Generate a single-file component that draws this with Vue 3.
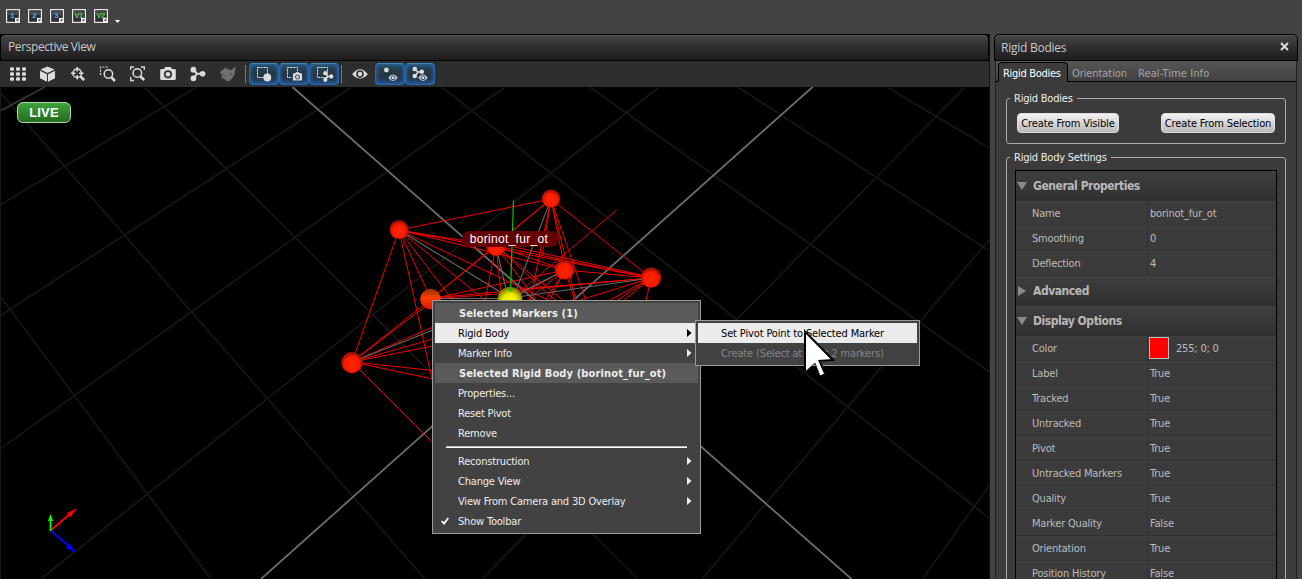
<script setup>
const layouts = [
  { label: '1', kind: 'blue', x: 4 },
  { label: '2', kind: 'blue', x: 4 },
  { label: '3', kind: 'blue', x: 4 },
  { label: 'V1', kind: 'green', x: 2.6 },
  { label: 'V2', kind: 'green', x: 2.6 },
]
const grid = [
  [0, 92.5, 425, 579], [0, 296, 211, 579], [144, 87, 638, 579], [441.7, 87, 989, 518],
  [590, 87, 989, 371.7], [738, 87, 989, 250.7], [887, 87, 989, 147.7],
  [0, 205, 197, 87], [0, 316, 352, 87], [0, 449, 505, 87], [40.7, 579, 659, 87],
  [482, 579, 965, 87], [989, 240, 702, 579], [989, 485.7, 922.7, 579],
]
const bonds = [
  [399, 230, 551, 199], [399, 230, 352, 362], [399, 230, 432, 379], [399, 230, 431, 299], [399, 230, 454, 302],
  [399, 230, 487, 302], [399, 230, 552, 302], [399, 230, 565, 270], [399, 230, 651, 278], [399, 230, 496, 246],
  [551, 199, 651, 278], [551, 199, 496, 244], [551, 199, 431, 299], [551, 199, 576, 301], [551, 199, 586, 301],
  [551, 199, 530, 301], [551, 199, 565, 270], [551, 199, 542, 256],
  [496, 246, 431, 299], [496, 246, 565, 270], [496, 246, 651, 278], [496, 243, 651, 277], [496, 246, 485, 301],
  [496, 246, 502, 301], [496, 246, 537, 301], [496, 246, 556, 301], [496, 246, 564, 301],
  [565, 270, 651, 278], [565, 270, 431, 299], [565, 270, 510, 300], [565, 270, 545, 301], [565, 270, 549, 301],
  [565, 270, 575, 301], [565, 270, 526, 301],
  [651, 278, 431, 298], [651, 278, 510, 290], [651, 278, 608, 301], [651, 278, 616, 301], [651, 278, 623, 301],
  [651, 278, 577, 301], [651, 278, 646, 301], [431, 299, 510, 293],
  [352, 362, 431, 299], [352, 362, 434, 300], [352, 362, 433, 327], [352, 362, 433, 339], [352, 362, 433, 346],
  [352, 362, 433, 370.5], [352, 362, 433, 379], [352, 362, 433, 443],
]
const pivots = [
  [399, 230, 510, 298], [551, 199, 514, 296], [496, 246, 508, 298], [565, 270, 510, 298],
  [651, 278, 510, 298], [431, 298.5, 510, 298.5], [352, 362, 433, 330],
]
const markers = [
  [399, 229.5, 9.5], [551, 198.5, 9.3], [496, 246, 10], [564.5, 269.5, 10], [651, 277.5, 10.3], [352, 362.5, 10.7],
]
const menu = [
  { head: 'Selected Markers (1)' },
  { text: 'Rigid Body', sub: true, on: true },
  { text: 'Marker Info', sub: true },
  { head: 'Selected Rigid Body (borinot_fur_ot)' },
  { text: 'Properties...' },
  { text: 'Reset Pivot' },
  { text: 'Remove' },
  { line: true },
  { text: 'Reconstruction', sub: true },
  { text: 'Change View', sub: true },
  { text: 'View From Camera and 3D Overlay', sub: true },
  { text: 'Show Toolbar', check: true },
]
const sections = [
  { title: 'General Properties', open: true, rows: [['Name', 'borinot_fur_ot'], ['Smoothing', '0'], ['Deflection', '4']] },
  { title: 'Advanced', open: false, rows: [] },
  {
    title: 'Display Options', open: true,
    rows: [['Color', '255; 0; 0', true], ['Label', 'True'], ['Tracked', 'True'], ['Untracked', 'True'], ['Pivot', 'True'],
      ['Untracked Markers', 'True'], ['Quality', 'True'], ['Marker Quality', 'False'], ['Orientation', 'True'], ['Position History', 'False']],
  },
]
</script>

<template>
  <div class="app">
    <header class="topbar">
      <svg v-for="l in layouts" :key="l.label" class="layout" width="14" height="14" viewBox="0 0 14 14">
        <rect x=".6" y=".6" width="12.8" height="12.8" fill="#303030" stroke="#e8e8e8" stroke-width="1.2" />
        <rect x="2" y="2" width="10" height="4" fill="#484848" />
        <text :x="l.x" y="9" :class="['num', l.kind]">{{ l.label }}</text>
        <path d="M9 9H14V14H9Z" fill="#eee" /><path d="M10 10.5H13L11.5 12.5Z" fill="#333" />
      </svg>
      <svg class="more" width="5" height="3" viewBox="0 0 5 3"><path d="M0 0H5L2.5 3Z" fill="#fff" /></svg>
    </header>

    <main class="body">
      <section class="view">
        <h2 class="title">Perspective View</h2>
        <nav class="tools">
          <svg width="30" height="26" viewBox="0 0 30 26" class="ic">
            <g v-for="y in [8, 13, 18]" :key="y"><rect v-for="x in [7, 13, 19]" :key="x" :x="x" :y="y - 1.7" width="4" height="3.4" rx="1.2" /></g>
          </svg>
          <svg width="30" height="26" viewBox="0 0 30 26" class="ic">
            <path d="M17.5 5.5L24.5 8.6L17.5 12L10.5 8.6ZM10 9.8L17 13.2V20.8L10 17.2ZM25 9.8L18 13.2V20.8L25 17.2Z" />
          </svg>
          <svg width="30" height="26" viewBox="0 0 30 26" class="ic">
            <g class="ln"><circle cx="17.2" cy="12.3" r="4.3" /><path d="M17.2 6V10.5M17.2 14V18.5M11 12.3H15.5M19 12.3H23.5" /><path d="M20.5 15.5L24.2 19.2" stroke-width="2.6" /></g>
          </svg>
          <svg width="30" height="26" viewBox="0 0 30 26" class="ic">
            <g class="ln"><circle cx="18.4" cy="13" r="4.2" /><path d="M21.5 16.3L25 20" stroke-width="2.6" /><path d="M10.5 14V6H19" stroke-dasharray="2 1.3" stroke-width="1.2" /></g>
          </svg>
          <svg width="30" height="26" viewBox="0 0 30 26" class="ic">
            <g class="ln"><circle cx="17.3" cy="12" r="4.3" /><path d="M20.5 15.5L24.2 19" stroke-width="2.6" /><path d="M10.7 9V6H14M21 6H24.3V9M10.7 16V19.5H14" stroke-width="1.3" /></g>
          </svg>
          <svg width="30" height="26" viewBox="0 0 30 26" class="ic">
            <path fill-rule="evenodd" d="M11.5 8H14L15.2 6H20.8L22 8H24.5Q25.8 8 25.8 9.2V17.8Q25.8 19 24.5 19H11.5Q10.2 19 10.2 17.8V9.2Q10.2 8 11.5 8ZM18 9.2A4.1 4.1 0 1 0 18 17.4A4.1 4.1 0 1 0 18 9.2Z" /><circle cx="18" cy="13.3" r="2.4" />
          </svg>
          <svg width="30" height="26" viewBox="0 0 30 26" class="ic">
            <circle cx="13.4" cy="8.7" r="2.9" /><circle cx="13.4" cy="17.3" r="2.9" /><circle cx="22.6" cy="12.8" r="2.8" /><path d="M13 8L17 12.8L13 18M16.5 12.8H22" class="ln thick" />
          </svg>
          <svg width="30" height="26" viewBox="0 0 30 26" class="ic dim">
            <path d="M10 11.5Q11 9 14 8.2L15.5 6L17.5 8.3L21.5 9L25.8 5.2L25 9.5Q25 14 22.5 17L18.5 20.5Q15 20 13.5 17L11.5 18.5L12 14Z" /><path d="M12.5 13L15 15.5M20 13.5L22 12.8" stroke="#484848" fill="none" />
          </svg>
          <i class="sep" />
          <span class="tg">
            <svg width="28" height="22" viewBox="0 0 28 22" class="ic"><rect x="7.5" y="4.5" width="10" height="10" class="dash" /><circle cx="17.3" cy="14.5" r="3.9" /></svg>
          </span>
          <span class="tg">
            <svg width="28" height="22" viewBox="0 0 28 22" class="ic"><rect x="7.5" y="4.5" width="10" height="10" class="dash" /><path d="M12.5 10H15L16 8.7H19L20 10H22.5V18H12.5Z" stroke="#24405a" /><circle cx="17.5" cy="14" r="2" class="lens" /></svg>
          </span>
          <span class="tg">
            <svg width="28" height="22" viewBox="0 0 28 22" class="ic"><rect x="7.5" y="4.5" width="10" height="10" class="dash" /><circle cx="15.3" cy="10.2" r="2.1" /><circle cx="15.3" cy="16.8" r="2.1" /><circle cx="21.2" cy="13.4" r="2.2" /><path d="M15.5 10.5L17.7 13.4L15.5 16.5M17 13.4H21" class="ln" /></svg>
          </span>
          <i class="sep two" />
          <svg width="34" height="26" viewBox="0 0 34 26" class="ic">
            <path fill-rule="evenodd" d="M10.2 13.2Q18 3.5 25.8 13.2Q18 22 10.2 13.2ZM18 9.2A3.8 3.8 0 1 0 18 16.8A3.8 3.8 0 1 0 18 9.2Z" /><circle cx="18" cy="13" r="2.2" />
          </svg>
          <span class="tg eye">
            <svg width="28" height="22" viewBox="0 0 28 22" class="ic"><circle cx="10.4" cy="7" r="2.4" /><path d="M12.3 14.8Q17 8 21.7 14.8Q17 21 12.3 14.8Z" /><circle cx="17" cy="14.8" r="2" class="lens" /></svg>
          </span>
          <span class="tg">
            <svg width="28" height="22" viewBox="0 0 28 22" class="ic"><circle cx="8.8" cy="6" r="2.3" /><circle cx="8.8" cy="13" r="2.3" /><circle cx="15.8" cy="8.8" r="2.3" /><path d="M9 6L12 9.3L9 13M11 9H16" class="ln" /><path d="M12.3 14.8Q17 8 21.7 14.8Q17 21 12.3 14.8Z" /><circle cx="17" cy="14.8" r="2" class="lens" /></svg>
          </span>
        </nav>

        <div class="scene">
          <svg class="canvas" width="989" height="492" viewBox="0 87 989 492">
            <defs>
              <radialGradient id="ball" cx=".5" cy=".58" r=".55"><stop offset="0" stop-color="#ff2800" /><stop offset=".62" stop-color="#fb1b00" /><stop offset="1" stop-color="#8a0d00" /></radialGradient>
              <linearGradient id="warm" x1="0" y1="0" x2="0" y2="1"><stop offset="0" stop-color="#8a3000" /><stop offset=".45" stop-color="#ff3c00" /><stop offset="1" stop-color="#d81800" /></linearGradient>
              <radialGradient id="sun" cx=".5" cy=".6" r=".6"><stop offset="0" stop-color="#ff0" /><stop offset=".5" stop-color="#eded00" /><stop offset="1" stop-color="#666600" /></radialGradient>
            </defs>
            <g stroke="#161616" stroke-width="1.7">
              <line v-for="(l, i) in grid" :key="i" :x1="l[0]" :y1="l[1]" :x2="l[2]" :y2="l[3]" />
            </g>
            <path d="M0 111L45 87" stroke="#363636" stroke-width="1.8" />
            <path d="M292.5 87L851.5 579M812.5 87L261 579" stroke="#6c6c6c" stroke-width="1.8" />
            <g stroke="#f00000" stroke-width="1"><line v-for="(l, i) in bonds" :key="i" :x1="l[0]" :y1="l[1]" :x2="l[2]" :y2="l[3]" /></g>
            <g stroke="#686868" stroke-width="1.1"><line v-for="(l, i) in pivots" :key="i" :x1="l[0]" :y1="l[1]" :x2="l[2]" :y2="l[3]" /></g>
            <path d="M616.7 210L510 300" stroke="#d80000" />
            <circle v-for="(m, i) in markers" :key="i" :cx="m[0]" :cy="m[1]" :r="m[2]" fill="url(#ball)" />
            <circle cx="430.5" cy="299" r="10.3" fill="url(#warm)" />
            <circle cx="510" cy="299" r="12.3" fill="url(#sun)" />
            <path d="M513.5 200.5L510.5 292" stroke="#00c800" stroke-width="1.2" />
            <g stroke-width="1.8">
              <path d="M51 530L70 514" stroke="#f00" /><path d="M77 508L67 513L70.5 517Z" fill="#f00" />
              <path d="M51 531L69 546" stroke="#00f" /><path d="M76 553L66 548L70 543.5Z" fill="#00f" />
              <path d="M50.5 531V519" stroke="#0f0" /><path d="M50.5 514L53 521H48Z" fill="#0f0" />
            </g>
          </svg>
          <span class="live">LIVE</span>
          <span class="tag">borinot_fur_ot</span>
        </div>
      </section>

      <aside class="side">
        <h2 class="title">Rigid Bodies<svg width="9" height="9" viewBox="0 0 9 9"><path d="M1 1L8 8M8 1L1 8" stroke="#ddd" stroke-width="2" /></svg></h2>
        <div class="inner">
          <div class="tabs"><span class="tab active">Rigid Bodies</span><span class="tab t2">Orientation</span><span class="tab t3">Real-Time Info</span></div>
          <div class="box first">
            <span class="legend">Rigid Bodies</span>
            <button>Create From Visible</button><button>Create From Selection</button>
          </div>
          <div class="box second">
            <span class="legend">Rigid Body Settings</span>
            <div class="props">
              <template v-for="s in sections" :key="s.title">
                <div class="sec">
                  <svg width="10" height="10" viewBox="0 0 10 10"><path :d="s.open ? 'M0 1H10L5 9Z' : 'M1 0V10L9 5Z'" fill="#8a8a8a" /></svg>{{ s.title }}
                </div>
                <div v-for="r in s.rows" :key="r[0]" class="prop">
                  <span class="k">{{ r[0] }}</span><span class="v"><i v-if="r[2]" class="sw" />{{ r[1] }}</span>
                </div>
              </template>
            </div>
          </div>
        </div>
      </aside>
    </main>

    <div class="menu main-menu">
      <template v-for="(m, i) in menu" :key="i">
        <div v-if="m.line" class="rule" />
        <div v-else-if="m.head" class="item head">{{ m.head }}</div>
        <div v-else :class="['item', { on: m.on }]">
          <svg v-if="m.check" class="check" width="8" height="8" viewBox="0 0 8 8"><path d="M.7 4L3 6.5L7.3 1" fill="none" stroke="#fff" stroke-width="1.8" /></svg>
          {{ m.text }}
          <svg v-if="m.sub" class="arrow" width="5" height="8" viewBox="0 0 5 8"><path d="M0 0V8L4.5 4Z" fill="currentColor" /></svg>
        </div>
      </template>
    </div>
    <div class="menu sub-menu">
      <div class="item on">Set Pivot Point to Selected Marker</div>
      <div class="item off">Create (Select at least 2 markers)</div>
    </div>
    <svg class="cursor" width="34" height="48" viewBox="0 0 34 48">
      <path d="M2.5 3V42.5L12 34L17 46.5L21.5 44.5L16.5 32.5L28.5 31Z" fill="#fff" />
      <path d="M2 42V2.5L30 31L16.5 31.8L21.8 44" fill="none" stroke="#000" stroke-width="2" />
      <path d="M2.5 42.5L12 34L17 46.5" fill="none" stroke="#222" stroke-width=".8" />
    </svg>
  </div>
</template>

<style>
body { margin: 0; overflow: hidden; background: #434343; }
</style>
<style scoped>
.app { position: relative; width: 1302px; height: 579px; overflow: hidden; background: #434343; font: 11px/20px "DejaVu Sans Condensed", "DejaVu Sans", sans-serif; font-stretch: condensed; letter-spacing: -.19px; color: #eee; display: flex; flex-direction: column; }
svg { display: block; flex: none; }
.topbar { height: 34px; flex: none; display: flex; align-items: flex-start; gap: 8px; padding: 9px 0 0 6px; box-sizing: border-box; }
.more { margin: 11px 0 0 -1px; }
.num { font: bold 8px "Liberation Mono", monospace; letter-spacing: -.6px; }
.blue { fill: #4da3e8; }
.green { fill: #59c354; }
.body { display: flex; flex: 1; min-height: 0; }
.view { width: 990px; box-sizing: border-box; border-right: 1px solid #111; background: #000; flex: none; }
.title { margin: 0; height: 27px; box-sizing: border-box; border: 1px solid #000; border-radius: 5px 5px 0 0; background: linear-gradient(#464646, #303030 45%, #1d1d1d); box-shadow: inset 0 1px #555; color: #c8c8c8; font: 12px/24px "Open Sans", sans-serif; letter-spacing: -.4px; padding: 0 8px 0 7px; display: flex; justify-content: space-between; }
.side .title { letter-spacing: -.25px; padding-left: 6px; line-height: 25px; }
.tools { height: 26px; background: #2e2e2e; display: flex; align-items: center; }
.ic { fill: #dcdcdc; }
.ln { fill: none; stroke: #dcdcdc; stroke-width: 1.5; }
.ln.thick { stroke-width: 2; }
.tools > .ic:first-child { margin-left: 3px; margin-right: -3px; }
.dim { fill: #707070; }
.sep { width: 1px; height: 18px; background: #777; margin: 0 3px 0 5px; }
.sep.two { margin: 0 0 0 2px; }
.tg { width: 30px; height: 22px; box-sizing: border-box; border: 1px solid #2565b4; border-radius: 4px; background: linear-gradient(#244b61, #273440 55%, #204370); box-shadow: inset 0 0 4px #2c79c4; border-top-color: #398abb; overflow: hidden; }
.tg.eye { margin-left: -1px; }
.tg svg { margin-top: -1px; }
.dash { fill: none; stroke: #eee; stroke-width: 1; stroke-dasharray: 2 1; }
.lens { fill: #dcdcdc; stroke: #263c52; stroke-width: 1; }
.scene { position: relative; height: 492px; overflow: hidden; border-left: 1px solid #181818; box-sizing: border-box; }
.canvas { margin-left: -1px; }
.live { position: absolute; left: 16px; top: 15px; width: 54px; height: 21px; box-sizing: border-box; border: 1.5px solid #b7d7b3; border-radius: 6px; background: linear-gradient(#3da23b, #236c20); font: bold 13px/20px "Liberation Sans", sans-serif; letter-spacing: .2px; text-align: center; color: #fff; }
.tag { position: absolute; left: 461px; top: 144px; width: 97px; height: 16px; border-radius: 8px; background: #640000; color: #fff; font: 12px/16px "Liberation Sans", sans-serif; letter-spacing: .3px; text-align: center; text-indent: -3px; }
.side { margin-left: 4px; width: 304px; flex: none; display: flex; flex-direction: column; }
.side .title svg { margin: 7px 0 0; }
.inner { flex: 1; min-height: 0; margin: 0 1px; border: 1px solid #222; border-width: 0 1px; background: #3b3b3b; overflow: hidden; }
.tabs { height: 20px; border-bottom: 1px solid #000; background: linear-gradient(#575757, #404040); display: flex; color: #a5a5a5; line-height: 25px; }
.tab { padding: 0 4px; white-space: nowrap; }
.tab.t2 { width: 58px; letter-spacing: -.08px; }
.tab.t3 { letter-spacing: 0.1px; }
.tab.active { margin: 1px 0 -1px 2px; height: 20px; box-sizing: border-box; width: 70px; border: 1px solid #000; border-bottom: 0; border-radius: 4px 4px 0 0; background: #3b3b3b; color: #fff; line-height: 21px; letter-spacing: -.3px; }
.box { position: relative; border: 1px solid #aaa; border-radius: 3px; margin: 16px 10px 0 10px; box-sizing: border-box; }
.legend { position: absolute; top: -10px; left: 3px; padding: 0 4px; line-height: 20px; letter-spacing: -.22px; background: #3b3b3b; }
.first { height: 46px; display: flex; justify-content: space-between; padding: 14px 10px 0; }
.second { margin-top: 13px; height: 500px; padding: 12px 8px 0; }
button { height: 20px; border: 1px solid #ddd; border-radius: 4px; background: linear-gradient(#f3f3f3, #b9b9b9); color: #000; font: inherit; letter-spacing: -.13px; line-height: 19px; padding: 0; width: 102px; white-space: nowrap; }
button + button { width: 114px; }
.props { border: 1px solid #000; color: #bcbcbc; }
.sec { height: 30px; background: linear-gradient(#3f3f3f, #303030); font: bold 12px/30px "DejaVu Sans Condensed", sans-serif; letter-spacing: -.45px; display: flex; align-items: center; padding-left: 1px; gap: 6px; color: #b8b8b8; }
.prop { height: 25px; line-height: 25px; display: flex; box-sizing: border-box; border-bottom: 1px solid #323232; box-shadow: inset 0 1px #414141; }
.k { width: 132px; padding-left: 16px; box-sizing: border-box; border-right: 1px solid #323232; }
.v { padding-left: 2px; display: flex; }
.sw { width: 18px; height: 20px; margin: 1px 7px 0 -1px; border: 1px solid #bbb; background: #f00; }
.menu { position: absolute; box-sizing: border-box; background: #424242; border: 1px solid #9b9b9b; padding: 2px; white-space: nowrap; }
.main-menu { left: 432px; top: 300px; width: 269px; height: 234px; }
.sub-menu { left: 695px; top: 320px; width: 225px; height: 46px; letter-spacing: -.14px; }
.item { position: relative; height: 20px; line-height: 21px; padding-left: 23px; }
.head { background: #5a5a5a; font-weight: bold; letter-spacing: .13px; padding-left: 24px; }
.on { background: #ebebeb; color: #000; }
.off { color: #858585; }
.arrow { position: absolute; left: 252px; top: 6px; }
.check { position: absolute; left: 6px; top: 6px; }
.rule { height: 2px; margin: 3px 11px; background: linear-gradient(#bbb 50%, #fff 50%); }
.cursor { position: absolute; left: 803px; top: 329px; }
</style>
